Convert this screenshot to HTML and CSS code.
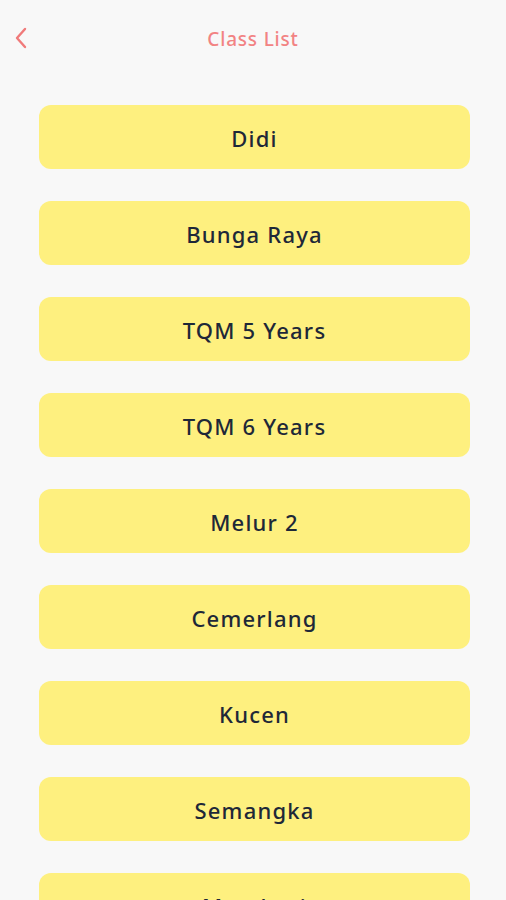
FILE: index.html
```html
<!DOCTYPE html>
<html lang="en">
<head>
    <meta charset="UTF-8">
    <meta name="viewport" content="width=device-width, initial-scale=1.0">
    <title>Class List</title>
    <link rel="stylesheet" href="styles.css">
</head>
<body>
    <header class="topbar">
        <button class="back" aria-label="Back">
            <svg width="15" height="22" viewBox="0 0 15 22">
                <path d="M12 2 L4 11 L12 20" fill="none" stroke="#f07a7a" stroke-width="2.4" stroke-linecap="round" stroke-linejoin="round"/>
            </svg>
        </button>
        <h1 class="title">Class List</h1>
    </header>
    <main class="class-list">
        <a class="class-item" href="#">Didi</a>
        <a class="class-item" href="#">Bunga Raya</a>
        <a class="class-item" href="#">TQM 5 Years</a>
        <a class="class-item" href="#">TQM 6 Years</a>
        <a class="class-item" href="#">Melur 2</a>
        <a class="class-item" href="#">Cemerlang</a>
        <a class="class-item" href="#">Kucen</a>
        <a class="class-item" href="#">Semangka</a>
        <a class="class-item" href="#">Matahari</a>
    </main>
</body>
</html>
```

FILE: styles.css
```css
body {
    margin: 0;
    background-color: #f8f8f8;
    font-family: "Noto Sans", Arial, sans-serif;
    height: 900px;
    overflow: hidden;
}
.topbar {
    position: relative;
    height: 77px;
    display: flex;
    align-items: center;
    justify-content: center;
}
.back {
    position: absolute;
    left: 13px;
    top: 27px;
    padding: 0;
    border: none;
    background: none;
    cursor: pointer;
}
.title {
    margin: 0;
    font-size: 19px;
    font-weight: 500;
    color: #f28383;
    letter-spacing: 0.8px;
}
.class-list {
    display: flex;
    flex-direction: column;
    gap: 32px;
    padding: 28px 36px 0 39px;
}
.class-item {
    display: flex;
    align-items: center;
    justify-content: center;
    height: 64px;
    padding-top: 2px;
    box-sizing: border-box;
    border-radius: 12px;
    background-color: #fef07f;
    color: #1e2838;
    font-size: 22px;
    font-weight: 500;
    letter-spacing: 1.2px;
    text-decoration: none;
}
```
